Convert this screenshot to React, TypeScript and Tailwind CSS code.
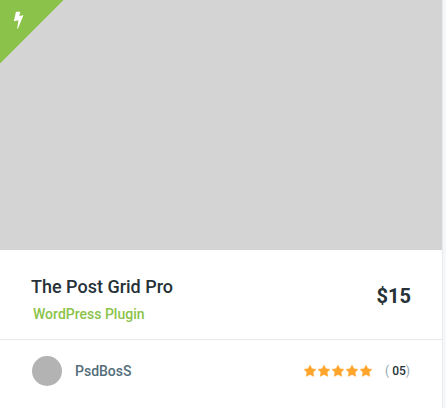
function Star() {
  return (
    <svg viewBox="0 0 14 14" className="size-3.5 text-[#ffa52b]" fill="currentColor" stroke="currentColor" strokeWidth="0.6" strokeLinejoin="round" aria-hidden="true">
      <path d="M7 1.200l1.850 3.600 4.050.600-2.900 2.850.700 4.050L7 10.400l-3.700 1.900.700-4.050L1.100 5.400l4.050-.600z" />
    </svg>
  );
}

function Ribbon() {
  return (
    <svg viewBox="0 0 64 64" className="size-16" aria-hidden="true">
      <path d="M0 0h63.500L0 63.500z" fill="#8bc34a" />
      <path d="M16 11.800h4.300l-1.100 4.300 4.200-.8-5.500 13.500h-.7l1.200-8.500-4.600.9z" fill="#fff" />
    </svg>
  );
}

export default function App() {
  return (
    <main className="min-h-screen bg-[#f5f7f8] pr-[3px] font-['Roboto',sans-serif]">
      <article className="min-h-screen border-r border-[#e6eaec] bg-white">
        <div className="h-[250px] bg-[#d4d4d4]">
          <Ribbon />
        </div>
        <div className="flex items-start justify-between border-b border-[#e8eaeb] pt-6 pr-[31px] pb-[13px] pl-[31px]">
          <div>
            <h2 className="text-lg leading-[26px] font-medium text-[#263238]">The Post Grid Pro</h2>
            <p className="mt-0.5 pl-0.5 text-sm leading-6 font-medium text-[#8bc34a]">WordPress Plugin</p>
          </div>
          <p className="pt-2.5 text-xl leading-6 font-bold text-[#263238]">$15</p>
        </div>
        <div className="flex items-center justify-between px-8 py-4">
          <div className="flex items-center gap-[13px]">
            <span className="size-[30px] rounded-full bg-[#b3b3b3]" />
            <span className="text-sm leading-5 font-medium text-[#546e7a]">PsdBosS</span>
          </div>
          <div className="flex items-center gap-3">
            <div className="flex" role="img" aria-label="5 stars">
              <Star />
              <Star />
              <Star />
              <Star />
              <Star />
            </div>
            <span className="text-xs leading-5 text-[#90a4ae]">
              ( <span className="font-medium text-[#263238]">05</span>)
            </span>
          </div>
        </div>
      </article>
    </main>
  );
}
